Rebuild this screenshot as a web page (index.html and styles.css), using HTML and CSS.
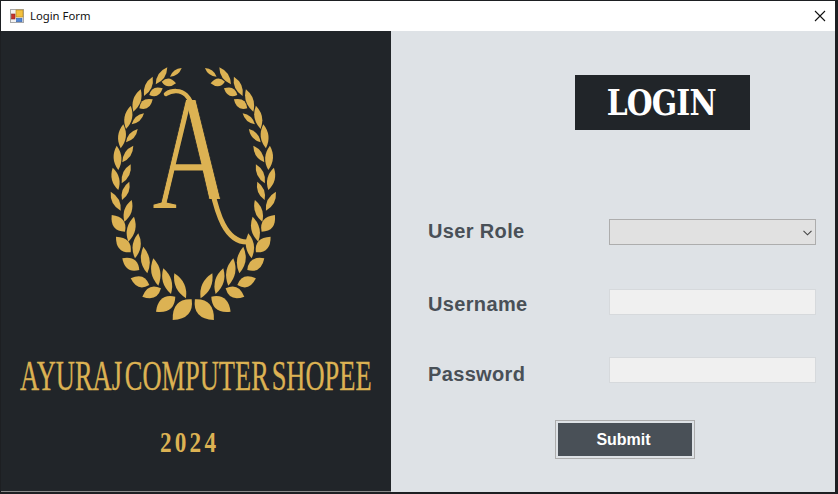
FILE: index.html
```html
<!DOCTYPE html>
<html lang="en">
<head>
<meta charset="utf-8">
<title>Login Form</title>
<link rel="stylesheet" href="styles.css">
</head>
<body>
<div class="window">
  <header class="titlebar">
    <svg class="app-icon" viewBox="0 0 14 14" width="14" height="14" aria-hidden="true">
      <rect x="0.5" y="0.5" width="13" height="13" fill="#f2f2f2" stroke="#a8a8a8"/>
      <rect x="6" y="1" width="7" height="7" fill="#f3c13f" stroke="#b98a22" stroke-width="0.7"/>
      <rect x="1.5" y="5" width="3.5" height="5" fill="#c8322c" stroke="#8c2a22" stroke-width="0.6"/>
      <rect x="6.5" y="9.3" width="5.5" height="3.4" fill="#4f86d8" stroke="#3a63a8" stroke-width="0.6"/>
    </svg>
    <span class="title">Login Form</span>
    <svg class="close" viewBox="0 0 12 12" width="12" height="12" aria-hidden="true">
      <path d="M1 1L11 11M11 1L1 11" stroke="#111" stroke-width="1.1" fill="none"/>
    </svg>
  </header>
  <main class="content">
    <section class="brand">
      <svg class="brand-art" viewBox="1 31 390 460" width="390" height="460" role="img" aria-label="Ayuraj Computer Shopee logo">
        <defs>
          <path id="s" d="M0 0Q.5 -.32 1 0Q.5 .32 0 0Z"/>
          <path id="f" d="M0 0Q.45 -.54 1 0Q.45 .54 0 0Z"/>
          <clipPath id="a-clip"><path d="M100 80H260V199H100Z"/><path d="M140 195H190V215H140Z"/></clipPath>
          <g id="branch">
            <use href="#s" transform="matrix(11.7 -8.7 8.7 11.7 170 76.7)"/>
            <use href="#s" transform="matrix(11.6 -17 17 11.6 155.7 84.3)"/>
            <use href="#f" transform="matrix(14.3 1.6 -1.6 14.3 161.7 81.7)"/>
            <use href="#s" transform="matrix(8.7 -19.3 19.3 8.7 144 96)"/>
            <use href="#f" transform="matrix(13.4 -6.7 6.7 13.4 149.3 95)"/>
            <use href="#s" transform="matrix(7.4 -22.4 22.4 7.4 133.3 111.7)"/>
            <use href="#f" transform="matrix(13.4 -9 9 13.4 139.3 108.3)"/>
            <use href="#s" transform="matrix(4.7 -23.3 23.3 4.7 126 129)"/>
            <use href="#s" transform="matrix(12.3 -11 11 12.3 131.7 124.3)"/>
            <use href="#s" transform="matrix(2.6 -24 24 2.6 120.7 148.3)"/>
            <use href="#s" transform="matrix(11.7 -13.3 13.3 11.7 126 142.3)"/>
            <use href="#s" transform="matrix(-1.6 -24.3 24.3 -1.6 118.3 170)"/>
            <use href="#s" transform="matrix(11 -16.6 16.6 11 122.3 162.3)"/>
            <use href="#s" transform="matrix(-5.6 -22.3 22.3 -5.6 118.3 190)"/>
            <use href="#s" transform="matrix(9 -19 19 9 121.7 183.3)"/>
            <use href="#s" transform="matrix(7.3 -18.3 18.3 7.3 122 200)"/>
            <use href="#s" transform="matrix(-10 -19 19 -10 120.7 210.7)"/>
            <use href="#s" transform="matrix(7.4 -21.7 21.7 7.4 124.3 221.7)"/>
            <use href="#f" transform="matrix(-13.3 -16.7 16.7 -13.3 125 231.7)"/>
            <use href="#s" transform="matrix(5.7 -25 25 5.7 128.3 241.7)"/>
            <use href="#f" transform="matrix(-14.7 -15.6 15.6 -14.7 130.7 252.3)"/>
            <use href="#s" transform="matrix(3.3 -25 25 3.3 135 258.3)"/>
            <use href="#f" transform="matrix(-17 -11.7 11.7 -17 139.3 270)"/>
            <use href="#s" transform="matrix(-4 -26.6 26.6 -4 147.3 273.3)"/>
            <use href="#f" transform="matrix(-18.6 -6.7 6.7 -18.6 149.3 285)"/>
            <use href="#s" transform="matrix(-5 -27.4 27.4 -5 158.3 285.7)"/>
            <use href="#f" transform="matrix(-18.7 8.4 -8.4 -18.7 161 288.3)"/>
            <use href="#s" transform="matrix(-7.7 -25.7 25.7 -7.7 171 294)"/>
            <use href="#f" transform="matrix(-19.3 15 -15 -19.3 175.3 296.7)"/>
            <use href="#s" transform="matrix(-11.7 -25 25 -11.7 186 298.3)"/>
            <use href="#f" transform="matrix(-19 20.7 -20.7 -19 191.7 299.3)"/>
          </g>
        </defs>
        <g class="gold">
          <use href="#branch"/>
          <use href="#branch" transform="matrix(-1 0 0 1 386.6 0)"/>
        </g>
        <g clip-path="url(#a-clip)">
          <text class="monogram" transform="matrix(.66 0 0 1 152 209)">A</text>
        </g>
        <path class="swash" d="M166 94C172 90 181 90 186 95C191 100 193 106 195 112"/>
        <path class="swash thin" d="M188 106L164 205"/>
        <path class="swash bar" d="M174 168H202"/>
        <path class="swash tail" d="M212 190C217 212 225 242 247 242"/>
        <text class="brand-name" transform="matrix(.63 0 0 1 20 390)">AYURAJ COMPUTER SHOPEE</text>
        <text class="brand-year" transform="matrix(.8 0 0 1 160 451.5)">2024</text>
      </svg>
    </section>
    <section class="panel">
      <h1 class="login-badge"><span class="login-text">LOGIN</span></h1>
      <form class="form">
        <div class="row">
          <label class="label label-role">User Role</label>
          <div class="select">
            <svg viewBox="0 0 9 6" width="9" height="6" aria-hidden="true"><path d="M.5 .8L4.5 4.8L8.5 .8" stroke="#444" stroke-width="1.1" fill="none"/></svg>
          </div>
        </div>
        <div class="row row-username">
          <label class="label label-username">Username</label>
          <input class="input" type="text">
        </div>
        <div class="row row-password">
          <label class="label label-password">Password</label>
          <input class="input" type="password">
        </div>
        <button class="submit" type="button"><span class="submit-face">Submit</span></button>
      </form>
    </section>
  </main>
</div>
</body>
</html>
```

FILE: styles.css
```css
* { box-sizing: border-box; }
html, body { margin: 0; padding: 0; }
body {
  width: 838px;
  height: 494px;
  overflow: hidden;
  background: #1d1f22;
}
.window {
  width: 835px;
  height: 492px;
  padding-top: 1px;
  display: flex;
  flex-direction: column;
}
.titlebar {
  height: 30px;
  background: #fff;
  margin-left: 1px;
  padding: 0 9px 0 9px;
  display: flex;
  align-items: center;
  gap: 6px;
}
.title {
  font: 11.3px/1 "Noto Sans", "Open Sans", sans-serif;
  color: #111;
  flex: 1;
}
.app-icon { display: block; }
.close { display: block; }
.content {
  flex: 1;
  display: flex;
  margin-left: 1px;
}
.brand {
  width: 390px;
  height: 461px;
  background: #212529;
  border-bottom: 1px solid #8a8a8a;
}
.brand-art { display: block; }
.gold, .gold use { fill: #dcb253; }
.monogram {
  font: 166px "Liberation Serif", serif;
  fill: #dcb253;
  stroke: #212529;
  stroke-width: 1.2;
}
.swash {
  fill: none;
  stroke: #dcb253;
  stroke-width: 4.5;
  stroke-linecap: round;
}
.thin { stroke-width: 3.6; }
.bar { stroke-width: 2.4; stroke-linecap: butt; }
.tail { stroke-width: 5; }
.brand-name {
  font: 42px "Liberation Serif", serif;
  word-spacing: -6px;
  fill: #dcb253;
  stroke: #dcb253;
  stroke-width: .35;
}
.brand-year {
  font: bold 29px "Liberation Serif", serif;
  letter-spacing: 4px;
  fill: #dcb253;
}
.panel {
  flex: 1;
  background: #dee2e6;
  padding: 44px 19px 0 37px;
  height: 461px;
}
.login-badge {
  width: 175px;
  height: 55px;
  margin: 0 0 89px 147px;
  padding-right: 3px;
  background: #212529;
  color: #fff;
  font: bold 35px/55px "DejaVu Serif", "Liberation Serif", serif;
  text-align: center;
  white-space: nowrap;
  display: flex;
  justify-content: center;
}
.login-text {
  display: block;
  letter-spacing: -1px;
  transform: scaleX(.85);
}
.form { display: flex; flex-direction: column; }
.row {
  display: flex;
  justify-content: space-between;
  height: 26px;
}
.row-username { margin-top: 44px; }
.row-password { margin-top: 42px; }
.label {
  font: bold 20px/26px "Liberation Sans", Arial, sans-serif;
  letter-spacing: .35px;
  color: #495057;
}
.label-role { line-height: 24px; }
.label-username { padding-top: 2px; }
.label-password { padding-top: 4px; }
.select {
  width: 207px;
  height: 26px;
  background: #e1e1e1;
  border: 1px solid #adadad;
  display: flex;
  align-items: center;
  justify-content: flex-end;
  padding: 2px 3px 0 0;
}
.input {
  width: 207px;
  height: 26px;
  margin: 0;
  padding: 0;
  background: #f0f0f0;
  border: 1px solid #f7f7f7;
  outline: 1px solid #d6d9dc;
  outline-offset: -1px;
}
.submit {
  width: 140px;
  height: 39px;
  margin: 37px 0 0 127px;
  padding: 2px;
  background: #dee2e6;
  border: 1px solid #adadad;
  display: block;
}
.submit-face {
  display: block;
  height: 100%;
  padding-right: 3px;
  background: #495057;
  color: #fff;
  font: bold 16px/33px "Liberation Sans", Arial, sans-serif;
  text-align: center;
}
```
